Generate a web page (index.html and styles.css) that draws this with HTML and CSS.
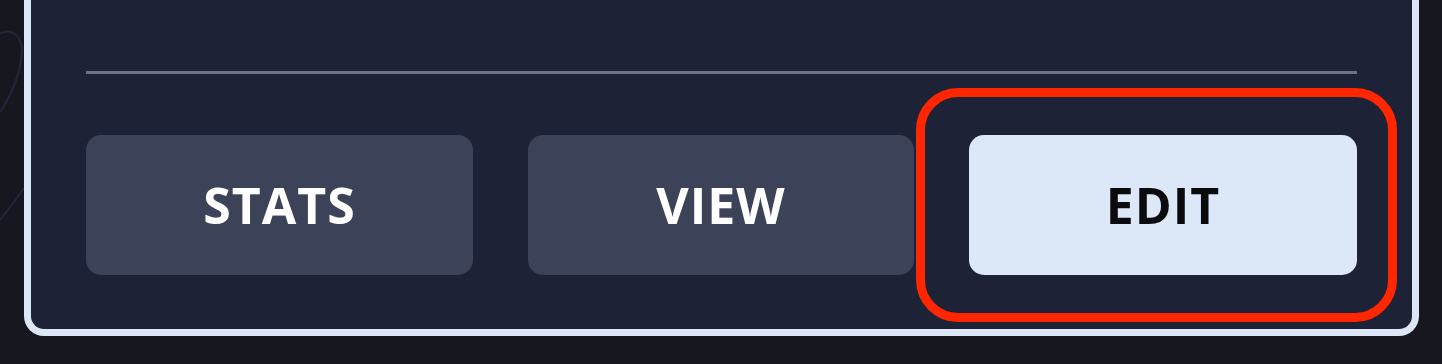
FILE: index.html
```html
<!DOCTYPE html>
<html lang="en">
<head>
<meta charset="utf-8">
<title>Actions</title>
<link rel="stylesheet" href="styles.css">
</head>
<body>
<svg class="bg-deco" width="30" height="260" viewBox="0 0 30 260" aria-hidden="true">
  <path d="M0 34 C 10 28, 20 34, 22 48 C 22 70, 12 95, 0 112" fill="none" stroke="#23273a" stroke-width="2"/>
  <path d="M24 188 C 16 200, 8 210, 0 220" fill="none" stroke="#23273a" stroke-width="2"/>
</svg>
<div class="card">
  <div class="divider"></div>
  <div class="actions">
    <button class="btn btn-dark">STATS</button>
    <button class="btn btn-dark">VIEW</button>
    <div class="btn-wrap">
      <button class="btn btn-light">EDIT</button>
      <span class="highlight"></span>
    </div>
  </div>
</div>
</body>
</html>
```
FILE: styles.css
```css
html, body {
  margin: 0;
  padding: 0;
}
body {
  background: #16171f;
  width: 1442px;
  height: 364px;
  overflow: hidden;
  position: relative;
  font-family: "Open Sans", "Liberation Sans", sans-serif;
}
.bg-deco {
  position: absolute;
  left: 0;
  top: 0;
}
.card {
  position: relative;
  margin-left: 24px;
  width: 1395px;
  box-sizing: border-box;
  background: #1e2236;
  border: 7px solid #dbe7f6;
  border-top: 0;
  border-radius: 0 0 20px 20px;
  padding: 71px 55px 54px;
}
.divider {
  height: 3px;
  background: #6c7189;
}
.actions {
  margin-top: 61px;
  display: grid;
  grid-template-columns: 387px 386px 388px;
  justify-content: space-between;
}
.btn-wrap {
  position: relative;
  display: flex;
}
.btn {
  height: 140px;
  width: 100%;
  border: 0;
  border-radius: 15px;
  font-family: "Open Sans", "Liberation Sans", sans-serif;
  font-weight: 700;
  font-size: 50px;
  letter-spacing: 1px;
  padding: 0;
  display: flex;
  align-items: center;
  justify-content: center;
}
.btn-dark {
  background: #3c4257;
  color: #ffffff;
}
.btn-light {
  background: #dce8f7;
  color: #0b0b0d;
}
.highlight {
  position: absolute;
  left: -53px;
  right: -40px;
  top: -47px;
  bottom: -47px;
  border: 9px solid #ff2600;
  border-radius: 42px;
  pointer-events: none;
}
```
